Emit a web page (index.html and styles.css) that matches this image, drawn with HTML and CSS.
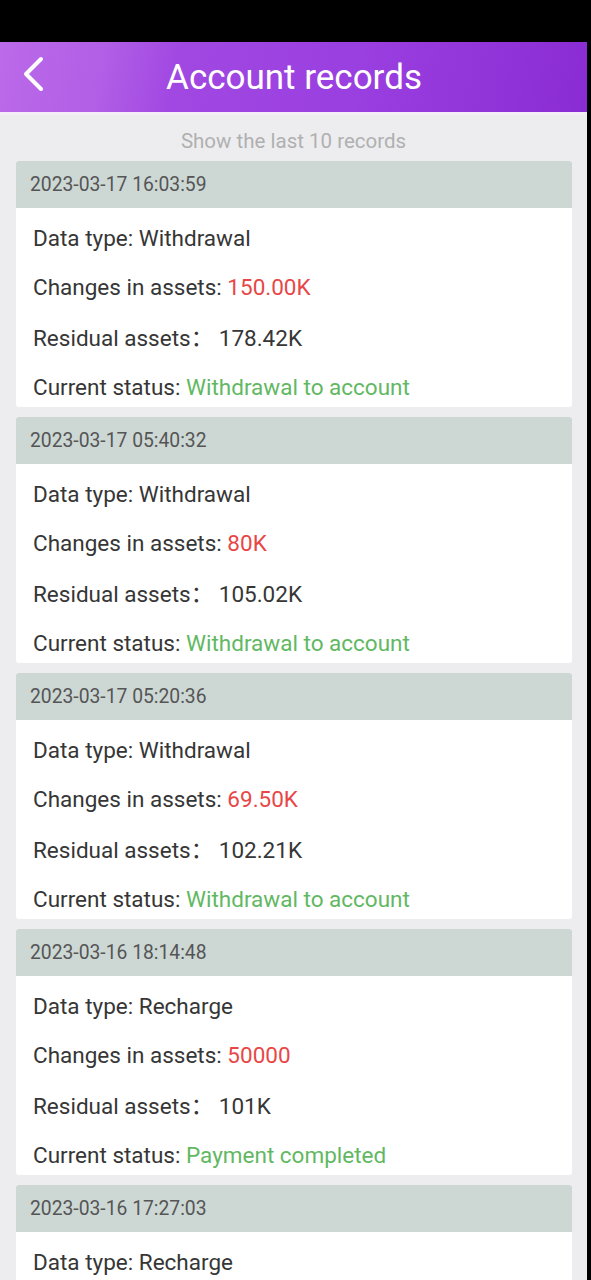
FILE: index.html
```html
<!DOCTYPE html>
<html>
<head>
  <link rel="stylesheet" href="styles.css">
</head>
<body>
  <div class="phone">
    <div class="status-bar"></div>
    <div class="header">
      <svg class="back" width="24" height="38" viewBox="0 0 24 38">
        <path d="M20 3 L5 18 L20 33" fill="none" stroke="#fff" stroke-width="4" stroke-linecap="round" stroke-linejoin="round"/>
      </svg>
      <h1>Account records</h1>
    </div>
    <div class="header-line"></div>
    <div class="subtitle">Show the last 10 records</div>

    <div class="record">
      <div class="record-date">2023-03-17 16:03:59</div>
      <div class="record-body">
        <div class="row">Data type: Withdrawal</div>
        <div class="row">Changes in assets: <span class="red">150.00K</span></div>
        <div class="row">Residual assets<span class="cjk">：</span> 178.42K</div>
        <div class="row">Current status: <span class="green">Withdrawal to account</span></div>
      </div>
    </div>

    <div class="record">
      <div class="record-date">2023-03-17 05:40:32</div>
      <div class="record-body">
        <div class="row">Data type: Withdrawal</div>
        <div class="row">Changes in assets: <span class="red">80K</span></div>
        <div class="row">Residual assets<span class="cjk">：</span> 105.02K</div>
        <div class="row">Current status: <span class="green">Withdrawal to account</span></div>
      </div>
    </div>

    <div class="record">
      <div class="record-date">2023-03-17 05:20:36</div>
      <div class="record-body">
        <div class="row">Data type: Withdrawal</div>
        <div class="row">Changes in assets: <span class="red">69.50K</span></div>
        <div class="row">Residual assets<span class="cjk">：</span> 102.21K</div>
        <div class="row">Current status: <span class="green">Withdrawal to account</span></div>
      </div>
    </div>

    <div class="record">
      <div class="record-date">2023-03-16 18:14:48</div>
      <div class="record-body">
        <div class="row">Data type: Recharge</div>
        <div class="row">Changes in assets: <span class="red">50000</span></div>
        <div class="row">Residual assets<span class="cjk">：</span> 101K</div>
        <div class="row">Current status: <span class="green">Payment completed</span></div>
      </div>
    </div>

    <div class="record record-last">
      <div class="record-date">2023-03-16 17:27:03</div>
      <div class="record-body">
        <div class="row">Data type: Recharge</div>
      </div>
    </div>
  </div>
</body>
</html>
```
FILE: styles.css
```css
body {
  margin: 0;
  background-color: #000;
  font-family: Roboto, "Noto Sans", sans-serif;
}

.phone {
  width: 587px;
  height: 1280px;
  overflow: hidden;
  background-color: #ededf0;
}

.status-bar {
  height: 42px;
  background-color: #000;
}

.header {
  height: 70px;
  display: flex;
  align-items: center;
  justify-content: center;
  position: relative;
  background: linear-gradient(100deg, #bb6ae9 0%, #b25ee6 18%, #a148e2 30%, #9a3fe0 60%, #8a2cd3 100%);
}

.header .back {
  position: absolute;
  left: 21px;
  top: 14px;
}

.header h1 {
  margin: 0 0 0 1px;
  color: #fff;
  font-weight: normal;
  font-size: 35px;
}

.header-line {
  height: 3px;
  background-color: #f4ecf6;
}

.subtitle {
  padding-top: 7px;
  line-height: 39px;
  text-align: center;
  color: #b0b0b0;
  font-size: 20.5px;
}

.record {
  margin: 0 15px 10px 16px;
  border-radius: 3px;
  overflow: hidden;
}

.record-date {
  height: 47px;
  line-height: 47px;
  padding-left: 14px;
  background-color: #cdd8d5;
  color: #555;
  font-size: 19.3px;
}

.record-body {
  background-color: #fff;
  padding: 6px 0 0 17px;
  height: 193px;
}

.record-last .record-body {
  height: 60px;
}

.row {
  line-height: 49px;
  font-size: 22.5px;
  color: #363636;
}

.cjk {
  font-family: "Noto Sans CJK SC", sans-serif;
}

.red {
  color: #e84747;
}

.green {
  color: #62b862;
}
```
